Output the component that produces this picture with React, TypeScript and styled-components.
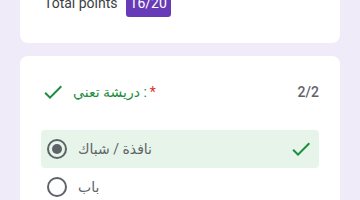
import React from "react";
import styled, { createGlobalStyle } from "styled-components";

const Global = createGlobalStyle`
  html, body { margin: 0; padding: 0; background: #f0ebf8; }
  body { font-family: Roboto, "DejaVu Sans", Arial, sans-serif; overflow: hidden; }
`;

const Page = styled.div`
  width: 360px;
  height: 200px;
  overflow: hidden;
  padding: 0 20px;
  box-sizing: border-box;
`;

const Stack = styled.div`
  display: flex;
  flex-direction: column;
  gap: 13px;
  margin-top: -35px;
`;

const Card = styled.div<{ $px?: number; $pb?: number }>`
  background: #ffffff;
  border-radius: 8px;
  padding: 24px ${(p) => p.$px ?? 24}px ${(p) => p.$pb ?? 24}px;
  box-sizing: border-box;
`;

const ScoreRow = styled.div`
  display: flex;
  align-items: center;
  gap: 8px;
  height: 28px;
`;

const ScoreLabel = styled.span`
  font-size: 14px;
  color: #3c4043;
`;

const Badge = styled.span`
  background: #673ab7;
  color: #ffffff;
  font-size: 14px;
  line-height: 20px;
  padding: 4px 4px;
  border-radius: 3px;
`;

const Header = styled.div`
  display: flex;
  align-items: center;
  height: 24px;
`;

const Title = styled.span`
  flex: 1;
  margin-left: 8px;
  font-size: 14px;
  color: #1e8e3e;
`;

const Asterisk = styled.span`
  color: #d93025;
  margin-left: 3px;
`;

const Points = styled.span`
  font-size: 14px;
  font-weight: 500;
  color: #5f6368;
`;

const Options = styled.div`
  display: flex;
  flex-direction: column;
  margin-top: 26px;
`;

const Option = styled.div<{ $correct?: boolean }>`
  display: flex;
  align-items: center;
  height: 38px;
  padding: 0 6px;
  border-radius: 4px;
  background: ${(p) => (p.$correct ? "#e6f4ea" : "transparent")};
`;

const Radio = styled.span<{ $checked?: boolean }>`
  width: 20px;
  height: 20px;
  box-sizing: border-box;
  border: 2px solid #5f6368;
  border-radius: 50%;
  display: flex;
  align-items: center;
  justify-content: center;
  flex: none;
  &::after {
    content: "";
    display: ${(p) => (p.$checked ? "block" : "none")};
    width: 10px;
    height: 10px;
    border-radius: 50%;
    background: #5f6368;
  }
`;

const OptionText = styled.span`
  flex: 1;
  margin-left: 11px;
  font-size: 14px;
  color: #5f6368;
`;

const CheckIcon = ({ color = "#1e8e3e" }: { color?: string }) => (
  <svg width="24" height="24" viewBox="0 0 24 24" style={{ flex: "none" }}>
    <path d="M9 16.17L4.83 12l-1.42 1.41L9 19 21 7l-1.41-1.41z" fill={color} />
  </svg>
);

export default function App() {
  return (
    <Page>
      <Global />
      <Stack>
        <Card $pb={26}>
          <ScoreRow>
            <ScoreLabel>Total points</ScoreLabel>
            <Badge>16/20</Badge>
          </ScoreRow>
        </Card>
        <Card $px={21}>
          <Header>
            <CheckIcon />
            <Title>
              دريشة تعني :<Asterisk>*</Asterisk>
            </Title>
            <Points>2/2</Points>
          </Header>
          <Options>
            <Option $correct>
              <Radio $checked />
              <OptionText>نافذة / شباك</OptionText>
              <CheckIcon />
            </Option>
            <Option>
              <Radio />
              <OptionText>باب</OptionText>
            </Option>
          </Options>
        </Card>
      </Stack>
    </Page>
  );
}
